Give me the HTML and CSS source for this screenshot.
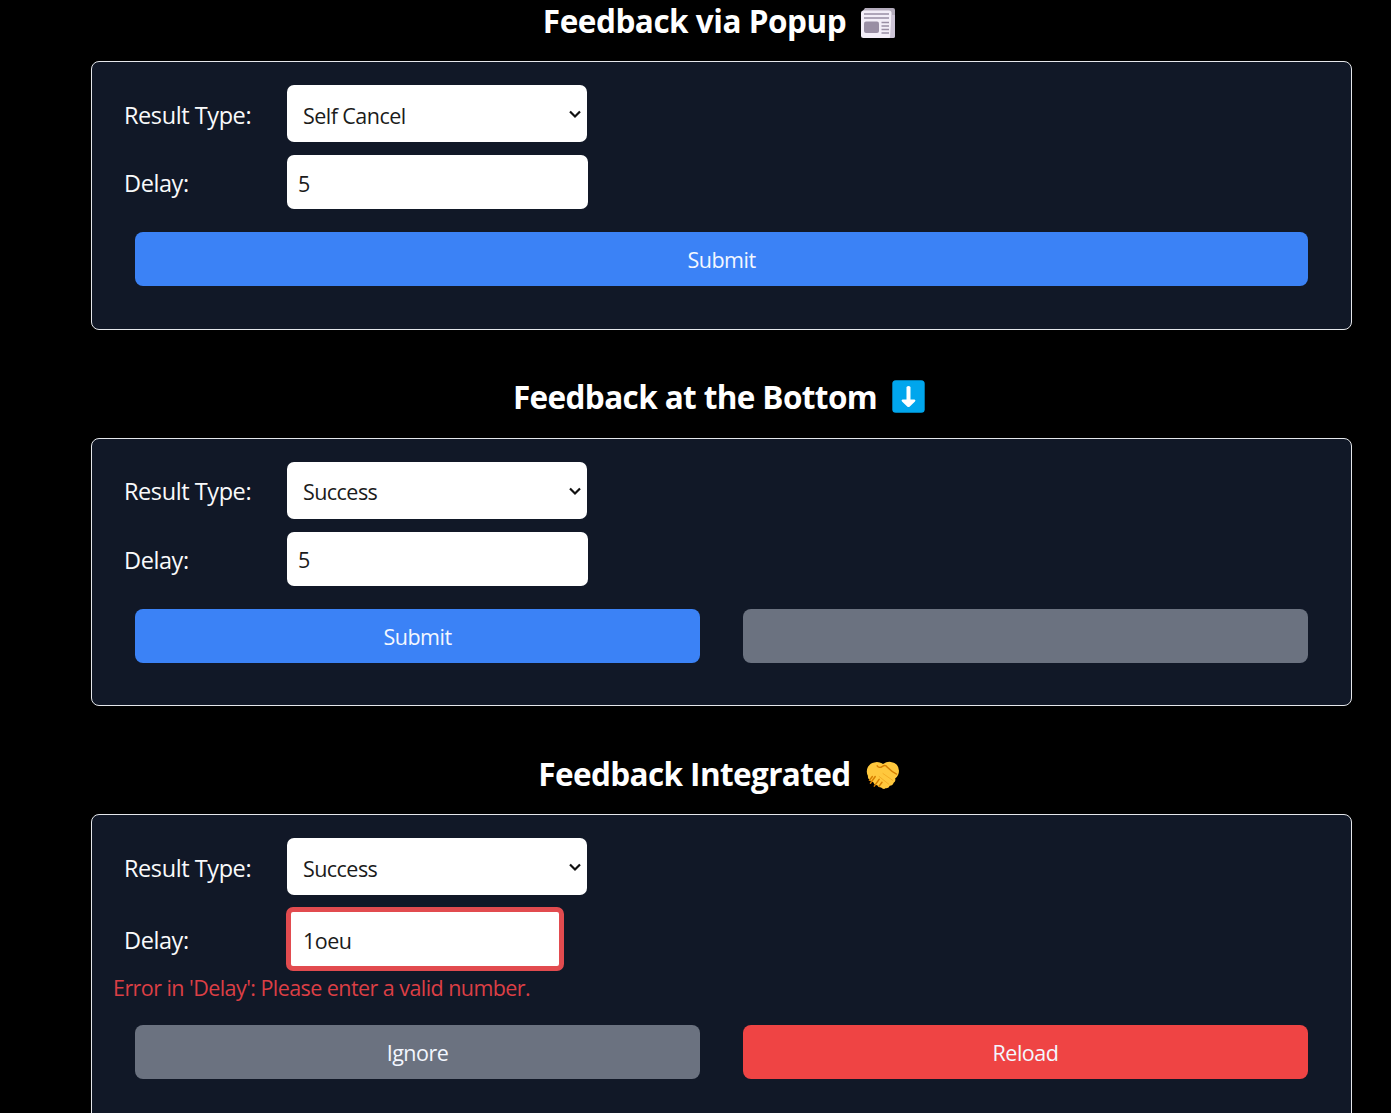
FILE: index.html
```html
<!DOCTYPE html>
<html lang="en">
<head>
<meta charset="utf-8">
<title>Feedback forms</title>
<link rel="stylesheet" href="styles.css">
</head>
<body>
<main class="page">
  <section class="demo">
    <h2 class="title"><span class="title-text t-popup">Feedback via Popup</span>
      <svg class="icon" viewBox="0 0 34 32"><path d="M4 1h28q2 0 2 2v26q0 2-2 2H20L1 5z" fill="#b4acbc"/><rect x="0" y="3.5" width="30.500" height="27.500" rx="2.500" fill="#f3eef8"/><path d="M30.500 8h3.500v21q0 2-2 2h-3z" fill="#cdc4d6"/><path d="M3 7h25M3 11h25" stroke="#998ea4" stroke-width="1.700"/><rect x="3" y="14.500" width="15" height="11.500" rx="2" fill="#998ea4"/><path d="M20.500 15.500H28M20.500 19H28M20.500 22.500H28M20.500 26H28" stroke="#998ea4" stroke-width="1.300"/></svg>
    </h2>
    <form class="panel">
      <div class="row row-select"><label class="label">Result Type:</label><div class="select-box"><select class="select"><option>Self Cancel</option></select><svg class="chevron" viewBox="0 0 14 10"><path d="M2 2.500l5 5 5-5"/></svg></div></div>
      <div class="row row-input"><label class="label">Delay:</label><input class="input" value="5"></div>
      <div class="actions"><button type="button" class="button blue">Submit</button></div>
    </form>
  </section>
  <section class="demo">
    <h2 class="title"><span class="title-text t-bottom">Feedback at the Bottom</span>
      <svg class="icon icon-arrow" viewBox="0 0 33 33"><rect x=".3" y=".3" width="32.400" height="32.400" rx="3.500" fill="#00a6ed"/><path d="M14.500 7q2-1.800 4 0v12.500h4q1.700.4.500 2l-5.200 5q-1.300 1-2.600 0l-5.200-5q-1.200-1.600.5-2h4z" fill="#fff"/></svg>
    </h2>
    <form class="panel">
      <div class="row row-select"><label class="label">Result Type:</label><div class="select-box"><select class="select"><option>Success</option></select><svg class="chevron" viewBox="0 0 14 10"><path d="M2 2.500l5 5 5-5"/></svg></div></div>
      <div class="row row-input"><label class="label">Delay:</label><input class="input" value="5"></div>
      <div class="actions"><button type="button" class="button blue">Submit</button><button type="button" class="button gray"></button></div>
    </form>
  </section>
  <section class="demo">
    <h2 class="title"><span class="title-text t-integrated">Feedback Integrated</span>
      <svg class="icon icon-hands" viewBox="0 0 34 32"><path d="M8 2.500Q12 1 17 4q4-2.500 8-2 8 1 8.500 9 0 5-4 8 1 3-1.500 4.500-1 3-4 3-1 3-4 2.500-2.500 2-5-.5-3 0-4-2.500-3 0-4-3-3-.5-4-3-2-1-1.500-3.500Q-1 12 1.500 7 4 3 8 2.500z" fill="#ffc83d"/><path d="M11 6q2 3 5.500.5 3-2 5 1 5 5 9.500 7M6 17l-3 4M9 17l-5 7M13 20l-5 7M16 23l-3 4" fill="none" stroke="#d67d00" stroke-width="1.500" stroke-linecap="round"/><path d="M13 17l10 8M17 14l10 7" fill="none" stroke="#f0a51e" stroke-width=".8" stroke-linecap="round"/></svg>
    </h2>
    <form class="panel panel-tall">
      <div class="row row-select"><label class="label">Result Type:</label><div class="select-box"><select class="select"><option>Success</option></select><svg class="chevron" viewBox="0 0 14 10"><path d="M2 2.500l5 5 5-5"/></svg></div></div>
      <div class="row row-invalid"><label class="label">Delay:</label><input class="input invalid" value="1oeu"></div>
      <p class="error">Error in 'Delay': Please enter a valid number.</p>
      <div class="actions"><button type="button" class="button gray">Ignore</button><button type="button" class="button red">Reload</button></div>
    </form>
  </section>
</main>
</body>
</html>
```
FILE: styles.css
```css
* { box-sizing: border-box; }
html { overflow: hidden; background: #000; }
body { height: 1113px; margin: 0; overflow: hidden; background: #000; color: #f9fafb; font-family: "Open Sans", "Noto Sans", sans-serif; }
.page { width: 1261px; margin-left: 91px; }
.demo { margin-bottom: 46.5px; }
.title { display: flex; justify-content: center; align-items: flex-start; gap: 15px; height: 61.2px; margin: 0; padding-right: 5px; font-size: 31.5px; font-weight: 700; line-height: 42px; white-space: nowrap; }
.demo + .demo .title { height: 61.5px; line-height: 41px; }
.title-text { color: #fff; }
.icon { width: 34px; height: 32px; margin-top: 7px; }
.icon-arrow { width: 33px; height: 33px; margin-top: 4px; }
.icon-hands { height: 31px; margin-top: 7px; }
.t-popup { letter-spacing: -0.48px; }
.t-bottom { letter-spacing: -0.62px; }
.t-integrated { letter-spacing: -0.62px; }
.panel { height: 268.5px; margin: 0; padding: 23px 43px 0 32px; border: 1px solid #e5e7eb; border-radius: 8px; background: #111827; }
.panel-tall { height: 320px; }
.row { display: grid; grid-template-columns: 163px 301px; align-items: center; }
.row-select { height: 57px; margin-bottom: 13px; }
.row-input { height: 54px; margin-bottom: 23px; }
.row-invalid { height: 64px; margin-top: -1px; }
.label { padding-top: 2px; font-size: 23.5px; line-height: 34px; letter-spacing: -0.42px; }
.select-box { position: relative; width: 300px; height: 57px; }
.select, .input { margin: 0; border: 0; border-radius: 7px; background: #fff; color: #1b1b1b; font-family: inherit; font-size: 21.5px; letter-spacing: -0.55px; }
.select { width: 100%; height: 100%; padding: 3px 36px 0 16px; appearance: none; }
.chevron { position: absolute; right: 5px; top: 24px; width: 14px; height: 10px; fill: none; stroke: #111; stroke-width: 2.2; }
.input { width: 301px; height: 54px; padding: 2px 11px 0; }
.invalid { width: 278px; height: 64px; margin-left: -1px; padding: 2px 12px 0; border: 5px solid #e24b4f; }
.error { height: 54px; margin: 0 0 0 -11px; padding-top: 2px; color: #dc3f45; font-size: 21.5px; line-height: 30px; letter-spacing: -0.56px; }
.actions { display: flex; gap: 43px; margin-left: 11px; }
.button { flex: 1 1 0; height: 54px; margin: 0; padding: 1px 0 0; border: 0; border-radius: 8px; color: #f3f7ff; font-family: inherit; font-size: 21.5px; letter-spacing: -0.5px; }
.blue { background: #3b82f6; }
.gray { background: #6b7280; }
.red { background: #ef4444; }
```
